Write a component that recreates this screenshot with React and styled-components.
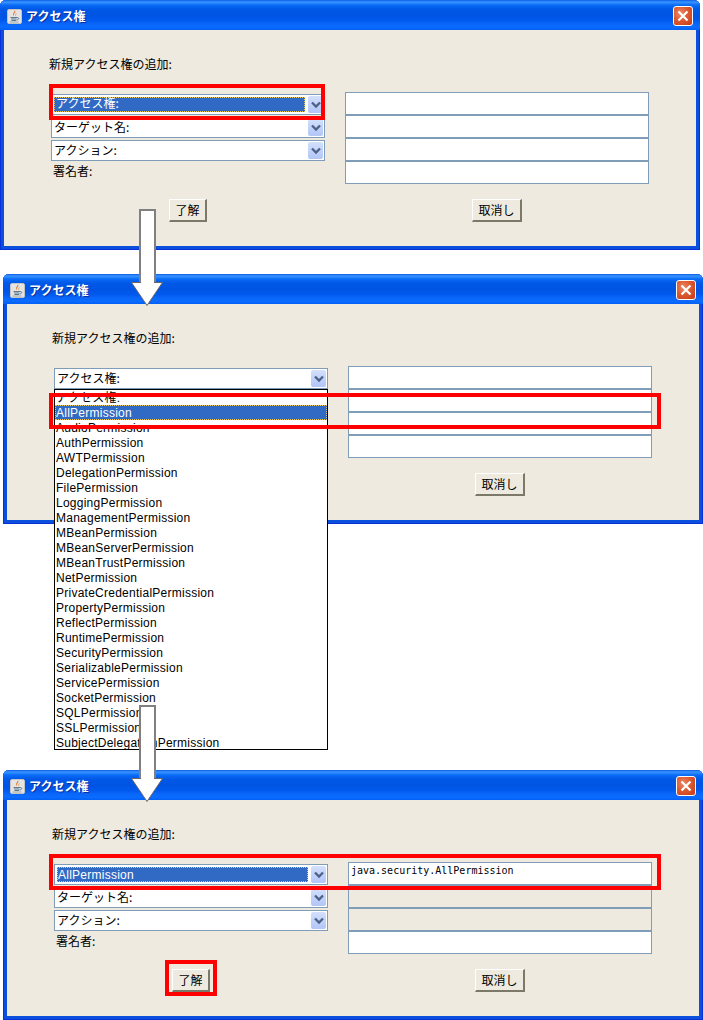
import React from "react";
import styled, { createGlobalStyle } from "styled-components";

const PERMISSIONS = [
  "アクセス権:",
  "AllPermission",
  "AudioPermission",
  "AuthPermission",
  "AWTPermission",
  "DelegationPermission",
  "FilePermission",
  "LoggingPermission",
  "ManagementPermission",
  "MBeanPermission",
  "MBeanServerPermission",
  "MBeanTrustPermission",
  "NetPermission",
  "PrivateCredentialPermission",
  "PropertyPermission",
  "ReflectPermission",
  "RuntimePermission",
  "SecurityPermission",
  "SerializablePermission",
  "ServicePermission",
  "SocketPermission",
  "SQLPermission",
  "SSLPermission",
  "SubjectDelegationPermission",
];

const GlobalStyle = createGlobalStyle`
  html, body {
    margin: 0;
    background: #fff;
  }
  body {
    font-family: "Noto Sans CJK JP", "Liberation Sans", sans-serif;
    font-size: 12px;
    color: #000;
  }
`;

const Page = styled.div`
  position: relative;
  width: 703px;
  height: 1020px;
  overflow: hidden;
`;

const Window = styled.section`
  position: relative;
  width: 700px;
  height: 250px;
  box-sizing: border-box;
  margin-left: ${(p) => p.$left}px;
  margin-top: ${(p) => p.$top}px;
  display: flex;
  flex-direction: column;
  background: #0a50dc;
  border-radius: 6px 6px 0 0;
  padding: 0 4px 4px;
  box-shadow: inset 1px 0 #0831d9, inset -1px 0 #0831d9, inset 0 -1px #0831d9;

  &::before {
    content: "";
    position: absolute;
    left: 0;
    top: 0;
    width: 3px;
    height: 3px;
    background: #000;
    z-index: -1;
  }
`;

const TitleBar = styled.header`
  height: 30px;
  margin: 0 -4px;
  padding: 0 7px;
  flex: none;
  display: flex;
  align-items: center;
  border-radius: 6px 6px 0 0;
  background: linear-gradient(
    180deg,
    #0a5ee8 0,
    #3a93ff 2px,
    #2a8aff 3px,
    #0a6cf8 5px,
    #0058e6 9px,
    #0054e3 16px,
    #0058ec 20px,
    #0a66fa 24px,
    #0a6cff 27px,
    #0460f4 30px
  );
`;

const TitleText = styled.span`
  margin-left: 4px;
  margin-top: 2px;
  color: #fff;
  font-size: 12px;
  font-weight: 700;
  line-height: 18px;
  text-shadow: 1px 1px 0 #0a2f9e;
  flex: 1;
`;

const IconTile = styled.svg`
  flex: none;
  margin-top: 2px;
`;

const CloseButton = styled.span`
  width: 20px;
  height: 20px;
  box-sizing: border-box;
  margin-top: 2px;
  display: flex;
  align-items: center;
  justify-content: center;
  border: 1px solid #fff;
  border-radius: 3px;
  background: radial-gradient(circle at 35% 35%, #ea8a6a 0, #dc5a30 45%, #c5391a 100%);
`;

const Client = styled.div`
  flex: 1;
  display: flex;
  flex-direction: column;
  background: #eeeadf;
  padding: 25px 0 0 45px;
`;

const Heading = styled.div`
  height: 18px;
  line-height: 18px;
`;

const FormRow = styled.div`
  display: flex;
  margin-top: 19px;
  gap: 20px;
  align-items: flex-start;
`;

const LeftColumn = styled.div`
  width: 274px;
  margin: 2px 0 0 2px;
  display: flex;
  flex-direction: column;
  gap: 2px;
`;

const RightColumn = styled.div`
  width: 304px;
  display: flex;
  flex-direction: column;
`;

const ComboWrap = styled.div`
  position: relative;
`;

const Combo = styled.div`
  height: 21px;
  box-sizing: border-box;
  border: 1px solid #7f9db9;
  background: #fff;
  display: flex;
  align-items: center;
  padding: 0 1px 0 2px;
`;

const ComboValue = styled.div`
  flex: 1;
  height: 15px;
  margin-left: ${(p) => (p.$selected ? 0 : -1)}px;
  margin-right: 3px;
  box-sizing: border-box;
  line-height: ${(p) => (p.$latin ? 14 : p.$selected ? 10 : 11)}px;
  padding-left: ${(p) => (p.$selected && !p.$latin ? 1 : 0)}px;
  white-space: nowrap;
  letter-spacing: ${(p) => (p.$latin ? 0.25 : 0)}px;
  font-family: ${(p) =>
    p.$latin ? '"Liberation Sans", sans-serif' : '"Noto Sans CJK JP", sans-serif'};
  color: ${(p) => (p.$selected ? "#fff" : "#000")};
  background: ${(p) => (p.$selected ? "#316ac5" : "transparent")};
  border: 1px ${(p) => (p.$selected ? "dotted #e8c860" : "solid transparent")};
`;

const ComboButton = styled.span`
  width: 15px;
  height: 17px;
  flex: none;
  display: flex;
  align-items: center;
  justify-content: center;
  border-radius: 2px;
  background: linear-gradient(180deg, #d4e0fc 0, #c1d2fb 50%, #b2c6f6 100%);
`;

const DropList = styled.ul`
  position: absolute;
  top: 100%;
  left: 0;
  right: 0;
  margin: 0;
  padding: 0;
  list-style: none;
  height: 361px;
  box-sizing: border-box;
  border: 1px solid #000;
  background: #fff;
  z-index: 2;
`;

const DropItem = styled.li`
  height: 15px;
  box-sizing: border-box;
  line-height: 16px;
  padding-left: 1px;
  white-space: nowrap;
  letter-spacing: 0.25px;
  font-family: "Liberation Sans", "Noto Sans CJK JP", sans-serif;
  color: ${(p) => (p.$selected ? "#fff" : "#000")};
  background: ${(p) => (p.$selected ? "#316ac5" : "transparent")};
  outline: ${(p) => (p.$selected ? "1px dotted #e8c860" : "none")};
  outline-offset: -1px;
`;

const SignerLabel = styled.div`
  height: 18px;
  line-height: 18px;
  margin: -1px 0 0 2px;
`;

const Field = styled.div`
  height: 23px;
  box-sizing: border-box;
  border: 1px solid #7f9db9;
  background: ${(p) => (p.$disabled ? "#eeeadf" : "#fff")};
  padding: 1px 0 0 2px;
  font-family: "DejaVu Sans Mono", "Liberation Mono", monospace;
  font-size: 10px;
  line-height: 13px;
`;

const ButtonRow = styled.div`
  display: flex;
  margin-left: 120px;
  margin-top: 15px;
  gap: 265px;
`;

const Button = styled.button`
  width: ${(p) => p.$width}px;
  height: 23px;
  padding: 0;
  box-sizing: border-box;
  font: inherit;
  line-height: 16px;
  color: #000;
  background: #eeeadf;
  border-style: solid;
  border-width: 1px 2px 2px 1px;
  border-color: #fff #7d7969 #7d7969 #fff;
`;

const Highlight = styled.div`
  position: absolute;
  left: ${(p) => p.$x}px;
  top: ${(p) => p.$y}px;
  width: ${(p) => p.$w}px;
  height: ${(p) => p.$h}px;
  box-sizing: border-box;
  border: 4px solid #f00;
  z-index: 4;
`;

const ArrowMark = styled.svg`
  position: absolute;
  left: 130px;
  top: ${(p) => p.$y}px;
  z-index: 3;
`;

function JavaIcon() {
  return (
    <IconTile width="15" height="15" viewBox="0 0 15 15">
      <rect x="0.5" y="0.5" width="14" height="14" rx="1.5" fill="#e6e4e0" stroke="#c4c4c4" />
      <path d="M8 1.5 C9.5 3 6 4.5 7 7 C5 5.5 7 3.5 8 1.5Z" fill="#e0661c" />
      <path d="M9.5 4 C10 5.5 8 6 8.5 7.5 C7.5 6.5 8.5 5 9.5 4Z" fill="#e8912f" />
      <path d="M3.5 8.5 H10 M4 10 H9.5 M4.5 11.5 H9" stroke="#5b7894" strokeWidth="1" />
      <path d="M10 8.5 C12.5 8.5 12.5 10.5 9.5 11" fill="none" stroke="#5b7894" strokeWidth="1" />
      <path d="M2.5 13 H11.5" stroke="#8fa4b8" strokeWidth="0.9" />
    </IconTile>
  );
}

function CloseIcon() {
  return (
    <svg width="12" height="12" viewBox="0 0 12 12">
      <path d="M1.5 1.5 L10.5 10.5 M10.5 1.5 L1.5 10.5" stroke="#fff" strokeWidth="2.2" />
    </svg>
  );
}

function Chevron() {
  return (
    <svg width="10" height="8" viewBox="0 0 10 8">
      <path d="M1 1.5 L5 5.5 L9 1.5" fill="none" stroke="#4d6185" strokeWidth="2.3" />
    </svg>
  );
}

function DownArrow({ y }) {
  return (
    <ArrowMark $y={y} width="34" height="98" viewBox="0 0 34 98">
      <path d="M10 1 H25 V75 H10 Z" fill="#fff" stroke="#808080" strokeWidth="2" />
      <path
        d="M1.5 73.5 H32.5 L17 96.5 Z"
        fill="#fff"
        stroke="#666"
        strokeWidth="1"
      />
      <rect x="11" y="70" width="13" height="5" fill="#fff" />
    </ArrowMark>
  );
}

function ComboBox({ value, selected, latin, open }) {
  return (
    <ComboWrap>
      <Combo>
        <ComboValue $selected={selected} $latin={latin}>
          {value}
        </ComboValue>
        <ComboButton>
          <Chevron />
        </ComboButton>
      </Combo>
      {open && (
        <DropList>
          {PERMISSIONS.map((name, i) => (
            <DropItem key={name} $selected={i === 1}>
              {name}
            </DropItem>
          ))}
        </DropList>
      )}
    </ComboWrap>
  );
}

function PermissionDialog({ left, top, open, filled }) {
  return (
    <Window $left={left} $top={top}>
      <TitleBar>
        <JavaIcon />
        <TitleText>アクセス権</TitleText>
        <CloseButton>
          <CloseIcon />
        </CloseButton>
      </TitleBar>
      <Client>
        <Heading>新規アクセス権の追加:</Heading>
        <FormRow>
          <LeftColumn>
            <ComboBox
              value={filled ? "AllPermission" : "アクセス権:"}
              latin={filled}
              selected={!open}
              open={open}
            />
            <ComboBox value="ターゲット名:" />
            <ComboBox value="アクション:" />
            <SignerLabel>署名者:</SignerLabel>
          </LeftColumn>
          <RightColumn>
            <Field>{filled ? "java.security.AllPermission" : ""}</Field>
            <Field $disabled={filled} />
            <Field $disabled={filled} />
            <Field />
          </RightColumn>
        </FormRow>
        <ButtonRow>
          <Button $width={38}>了解</Button>
          <Button $width={50}>取消し</Button>
        </ButtonRow>
      </Client>
    </Window>
  );
}

export default function App() {
  return (
    <Page>
      <GlobalStyle />
      <PermissionDialog left={0} top={0} />
      <PermissionDialog left={3} top={24} open />
      <PermissionDialog left={3} top={246} filled />
      <DownArrow y={209} />
      <DownArrow y={705} />
      <Highlight $x={49} $y={84} $w={276} $h={36} />
      <Highlight $x={49} $y={393} $w={612} $h={36} />
      <Highlight $x={49} $y={854} $w={612} $h={36} />
      <Highlight $x={165} $y={960} $w={52} $h={36} />
    </Page>
  );
}
